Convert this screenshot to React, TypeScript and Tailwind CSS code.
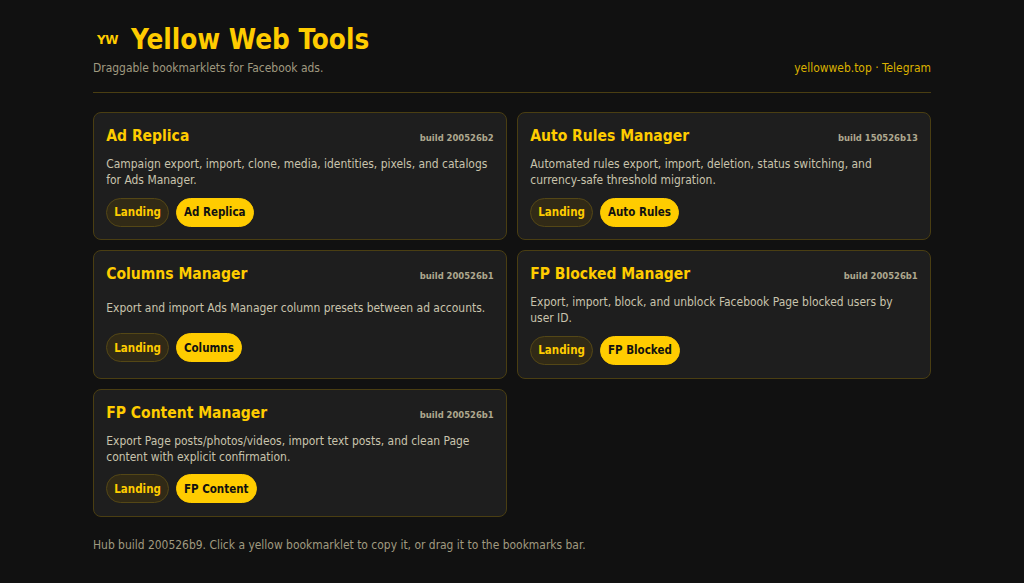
const font = "font-['DejaVu_Sans_Condensed','DejaVu_Sans',sans-serif]";

type Tool = {
  title: string;
  build: string;
  description: string;
  action: string;
};

const tools: Tool[] = [
  {
    title: "Ad Replica",
    build: "build 200526b2",
    description: "Campaign export, import, clone, media, identities, pixels, and catalogs for Ads Manager.",
    action: "Ad Replica",
  },
  {
    title: "Auto Rules Manager",
    build: "build 150526b13",
    description: "Automated rules export, import, deletion, status switching, and currency-safe threshold migration.",
    action: "Auto Rules",
  },
  {
    title: "Columns Manager",
    build: "build 200526b1",
    description: "Export and import Ads Manager column presets between ad accounts.",
    action: "Columns",
  },
  {
    title: "FP Blocked Manager",
    build: "build 200526b1",
    description: "Export, import, block, and unblock Facebook Page blocked users by user ID.",
    action: "FP Blocked",
  },
  {
    title: "FP Content Manager",
    build: "build 200526b1",
    description: "Export Page posts/photos/videos, import text posts, and clean Page content with explicit confirmation.",
    action: "FP Content",
  },
];

const ToolCard = ({ tool }: { tool: Tool }) => {
  return (
    <div className="grid gap-[7px] rounded-lg border border-[#4a3e12] bg-[#1e1e1e] px-[12.25px] pt-[10px] pb-[12.8px]">
      <div className="flex items-baseline justify-between gap-2 self-start">
        <h2 className="text-[15.5px] leading-[26px] font-bold text-[#ffcc00]">{tool.title}</h2>
        <span className="text-[9.4px] font-bold text-[#aea88f]">{tool.build}</span>
      </div>
      <p className="text-[11.95px] leading-[16px] text-[#c9c4ad]">{tool.description}</p>
      <div className="flex items-center gap-[7px] pt-[2.5px]">
        <a className="rounded-full border border-[#544716] bg-[#312a16] px-[7px] py-[5.5px] text-[11.5px] leading-[16px] font-bold text-[#ffcc00]">
          Landing
        </a>
        <a className="rounded-full border border-[#ffcc00] bg-[#ffcc00] px-[7px] py-[5.5px] text-[11.5px] leading-[16px] font-bold text-[#111111]">
          {tool.action}
        </a>
      </div>
    </div>
  );
};

export default function App() {
  return (
    <div className={`min-h-[583px] bg-[#111111] ${font}`}>
      <div className="mx-auto w-[838px] pt-[21px]">
        <header className="flex items-end justify-between border-b border-[#4a3e12] pb-[16px]">
          <div>
            <h1 className="mb-[1px] flex items-center gap-[13px] pl-[4px] text-[27.6px] leading-[38px] font-bold text-[#ffcc00]">
              <span className="font-['DejaVu_Sans',sans-serif] text-[12px] font-black tracking-[-0.5px]">YW</span>
              Yellow Web Tools
            </h1>
            <p className="text-[11.95px] leading-[16px] text-[#a09a80]">Draggable bookmarklets for Facebook ads.</p>
          </div>
          <div className="text-[11.95px] leading-[16px] text-[#dcb200]">yellowweb.top · Telegram</div>
        </header>
        <main className="mt-[19px] grid grid-cols-2 gap-[10px]">
          {tools.map((tool) => (
            <ToolCard key={tool.title} tool={tool} />
          ))}
        </main>
        <p className="mt-[20px] text-[11.95px] leading-[16px] text-[#a09a80]">
          Hub build 200526b9. Click a yellow bookmarklet to copy it, or drag it to the bookmarks bar.
        </p>
      </div>
    </div>
  );
}
